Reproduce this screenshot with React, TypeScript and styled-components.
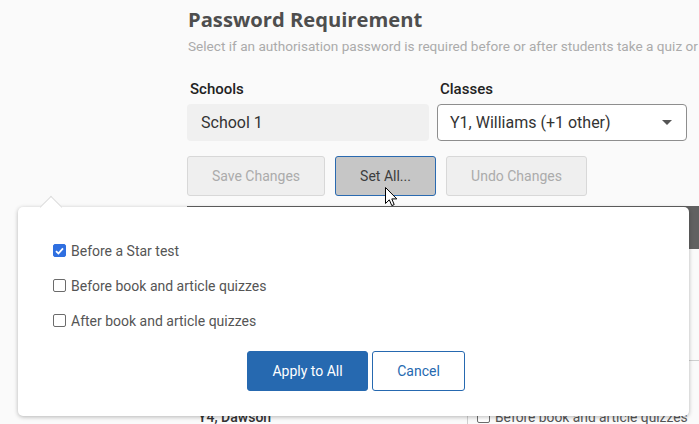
import React from "react";
import styled, { createGlobalStyle } from "styled-components";

const GlobalStyle = createGlobalStyle`
  html, body { margin: 0; padding: 0; background: #fafafa; }
  body { font-family: Roboto, "Liberation Sans", sans-serif; overflow: hidden; }
  * { box-sizing: border-box; }
`;

const Page = styled.div`
  position: relative;
  width: 699px;
  height: 424px;
  overflow: hidden;
  background: #fafafa;
`;

const Main = styled.div`
  padding: 5px 0 0 187px;
  width: 1000px;
`;

const Title = styled.h1`
  margin: 0 0 0 1px;
  font-family: "Open Sans", sans-serif;
  font-weight: 700;
  font-size: 20.2px;
  line-height: 28px;
  color: #4e4e4e;
`;

const Subtitle = styled.p`
  margin: 5px 0 0 1px;
  font-size: 13.6px;
  line-height: 16px;
  color: #ababab;
  white-space: nowrap;
`;

const Fields = styled.div`
  display: flex;
  gap: 8px;
  margin-top: 26px;
`;

const Field = styled.div<{ $w: number }>`
  display: flex;
  flex-direction: column;
  width: ${(p) => p.$w}px;
`;

const Label = styled.div`
  font-size: 15px;
  font-weight: 500;
  line-height: 18px;
  color: #222;
  padding-left: 3px;
  margin-bottom: 6px;
`;

const ReadOnlyBox = styled.div`
  height: 37px;
  background: #f0f0f0;
  border-radius: 4px;
  display: flex;
  align-items: center;
  padding-left: 14px;
  font-size: 16px;
  color: #333;
`;

const SelectBox = styled.div`
  height: 37px;
  background: #fff;
  border: 1px solid #8e8e8e;
  border-radius: 4px;
  display: flex;
  align-items: center;
  justify-content: space-between;
  padding: 0 14px 0 12px;
  font-size: 16px;
  color: #333;
`;

const Caret = styled.span`
  width: 0;
  height: 0;
  border-left: 5px solid transparent;
  border-right: 5px solid transparent;
  border-top: 5px solid #555;
`;

const ButtonRow = styled.div`
  display: flex;
  gap: 10px;
  margin-top: 15px;
`;

const ActionButton = styled.button<{ $w: number; $active?: boolean }>`
  width: ${(p) => p.$w}px;
  height: 40px;
  border-radius: 3px;
  font-family: Roboto, sans-serif;
  font-size: 14px;
  background: ${(p) => (p.$active ? "#c6c6c6" : "#efefef")};
  border: 1px solid ${(p) => (p.$active ? "#2a6ab0" : "#d8d8d8")};
  color: ${(p) => (p.$active ? "#3d3d3d" : "#ababab")};
  padding: 0;
`;

const Table = styled.div`
  margin-top: 10px;
  width: 800px;
`;

const TableHeader = styled.div`
  height: 43px;
  background: #616161;
`;

const Row = styled.div`
  display: flex;
  border-bottom: 1px solid #cfcfcf;
`;

const NameCell = styled.div`
  width: 281px;
  display: flex;
  align-items: center;
  padding-left: 11px;
  font-size: 14px;
  font-weight: 500;
  color: #333;
  border-right: 1px solid #cfcfcf;
`;

const OptionsCell = styled.div`
  display: flex;
  flex-direction: column;
  padding: 3px 0 3px 9px;
  font-size: 13.8px;
`;

const Option = styled.label`
  height: 35px;
  display: flex;
  align-items: center;
  gap: 5px;
  color: #555;
`;

const Box = styled.span<{ $checked?: boolean }>`
  width: 13px;
  height: 13px;
  border-radius: 2px;
  border: 1px solid ${(p) => (p.$checked ? "#2f6fe0" : "#6b6b6b")};
  background: ${(p) => (p.$checked ? "#2f6fe0" : "#fff")};
  display: inline-flex;
  align-items: center;
  justify-content: center;
  flex: none;
`;

const Popover = styled.div`
  position: absolute;
  left: 18px;
  top: 207px;
  width: 671px;
  height: 209px;
  background: #fff;
  border-radius: 5px;
  box-shadow: 0 1px 4px rgba(0, 0, 0, 0.28);
  padding: 26px 0 0 35px;
  font-size: 14px;
`;

const PopArrow = styled.div`
  position: absolute;
  left: 25px;
  top: -8px;
  width: 16px;
  height: 16px;
  background: #fff;
  border-top: 1px solid #dcdcdc;
  border-left: 1px solid #dcdcdc;
  transform: rotate(45deg);
`;

const PopOptions = styled.div`
  display: flex;
  flex-direction: column;
`;

const PopFooter = styled.div`
  display: flex;
  justify-content: center;
  gap: 4px;
  margin-top: 13px;
  padding-right: 30px;
`;

const PrimaryButton = styled.button`
  width: 121px;
  height: 40px;
  border-radius: 3px;
  border: 1px solid #2669b0;
  background: #2669b0;
  color: #fff;
  font-family: Roboto, sans-serif;
  font-size: 14px;
  padding: 0;
`;

const SecondaryButton = styled.button`
  width: 93px;
  height: 40px;
  border-radius: 3px;
  border: 1px solid #2669b0;
  background: #fff;
  color: #2669b0;
  font-family: Roboto, sans-serif;
  font-size: 14px;
  padding: 0;
`;

const Cursor = styled.svg`
  position: absolute;
  left: 385px;
  top: 187px;
`;

const Check = () => (
  <svg width="9" height="8" viewBox="0 0 9 8">
    <path d="M1 4.2 L3.4 6.5 L8 1.3" fill="none" stroke="#fff" strokeWidth="1.8" />
  </svg>
);

const CheckOption = ({ label, checked }: { label: string; checked?: boolean }) => (
  <Option>
    <Box $checked={checked}>{checked && <Check />}</Box>
    {label}
  </Option>
);

const options = ["Before a Star test", "Before book and article quizzes", "After book and article quizzes"];

export default function App() {
  return (
    <Page>
      <GlobalStyle />
      <Main>
        <Title>Password Requirement</Title>
        <Subtitle>
          Select if an authorisation password is required before or after students take a quiz or test.
        </Subtitle>
        <Fields>
          <Field $w={242}>
            <Label>Schools</Label>
            <ReadOnlyBox>School 1</ReadOnlyBox>
          </Field>
          <Field $w={250}>
            <Label>Classes</Label>
            <SelectBox>
              Y1, Williams (+1 other)
              <Caret />
            </SelectBox>
          </Field>
        </Fields>
        <ButtonRow>
          <ActionButton $w={138}>Save Changes</ActionButton>
          <ActionButton $w={101} $active>
            Set All...
          </ActionButton>
          <ActionButton $w={141}>Undo Changes</ActionButton>
        </ButtonRow>
        <Table>
          <TableHeader />
          <Row>
            <NameCell>Y1, Williams</NameCell>
            <OptionsCell>
              {options.map((o) => (
                <CheckOption key={o} label={o} />
              ))}
            </OptionsCell>
          </Row>
          <Row>
            <NameCell>Y4, Dawson</NameCell>
            <OptionsCell>
              {options.map((o) => (
                <CheckOption key={o} label={o} />
              ))}
            </OptionsCell>
          </Row>
        </Table>
      </Main>
      <Popover>
        <PopArrow />
        <PopOptions>
          <CheckOption label="Before a Star test" checked />
          <CheckOption label="Before book and article quizzes" />
          <CheckOption label="After book and article quizzes" />
        </PopOptions>
        <PopFooter>
          <PrimaryButton>Apply to All</PrimaryButton>
          <SecondaryButton>Cancel</SecondaryButton>
        </PopFooter>
      </Popover>
      <Cursor width="13" height="20" viewBox="0 0 13 20">
        <path
          d="M0.5 0.5 L0.5 16.5 L4.3 12.8 L6.8 18.6 L9.2 17.6 L6.8 11.9 L11.8 11.9 Z"
          fill="#fff"
          stroke="#000"
          strokeWidth="1"
          strokeLinejoin="miter"
        />
      </Cursor>
    </Page>
  );
}
